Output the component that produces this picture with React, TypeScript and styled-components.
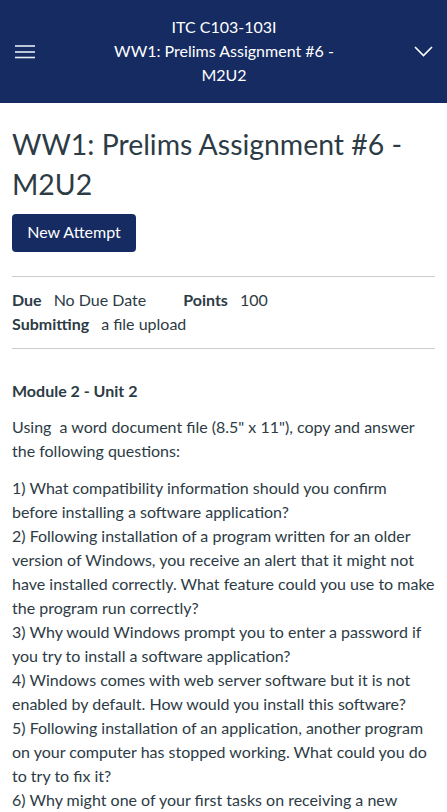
import React from "react";
import styled, { createGlobalStyle } from "styled-components";

const Global = createGlobalStyle`
  html, body { margin: 0; padding: 0; background: #ffffff; }
  body { font-family: Lato, "Open Sans", "Liberation Sans", sans-serif; color: #2d3b45; }
`;

const Header = styled.header`
  height: 103px;
  background: #152b62;
  display: flex;
  align-items: center;
  justify-content: space-between;
  padding: 0 14px 0 15px;
  box-sizing: border-box;
  color: #ffffff;
`;

const IconButton = styled.div`
  width: 20px;
  height: 20px;
  display: flex;
  align-items: center;
  justify-content: center;
`;

const HeaderTitle = styled.div`
  width: 250px;
  margin-top: -1px;
  text-align: center;
  font-size: 16px;
  line-height: 24px;
  color: #ffffff;
`;

const Main = styled.main`
  padding: 21px 12px 0 12px;
`;

const Title = styled.h1`
  margin: 0;
  font-size: 28.4px;
  line-height: 40px;
  font-weight: 400;
  color: #2d3b45;
`;

const PrimaryButton = styled.button`
  margin-top: 10px;
  width: 124px;
  height: 38px;
  background: #152b62;
  color: #ffffff;
  border: none;
  border-radius: 4px;
  font-family: inherit;
  font-size: 16px;
  line-height: 20px;
  padding: 0 0 3px 0;
`;

const Divider = styled.hr<{ $top: number }>`
  margin: ${(p) => p.$top}px 0 0 0;
  border: none;
  border-top: 1px solid #c7cdd1;
  height: 0;
`;

const Details = styled.div`
  padding: 11px 0 12px 0;
  font-size: 16px;
  line-height: 24px;
`;

const DetailRow = styled.div`
  display: flex;
  gap: 37px;
`;

const Detail = styled.span`
  display: inline-flex;
  gap: 12px;
`;

const Label = styled.span`
  font-weight: 700;
`;

const Body = styled.div`
  padding-top: 30px;
  font-size: 16px;
  line-height: 24px;
`;

const Heading = styled.p`
  margin: 0 0 12px 0;
  font-weight: 700;
`;

const Para = styled.p`
  margin: 0 0 13px 0;
`;

export default function App() {
  return (
    <>
      <Global />
      <Header>
        <IconButton>
          <svg width="20" height="14" viewBox="0 0 20 14">
            <g stroke="#e8ecf5" strokeWidth="1.6">
              <line x1="0" y1="1" x2="20" y2="1" />
              <line x1="0" y1="7" x2="20" y2="7" />
              <line x1="0" y1="12.5" x2="20" y2="12.5" />
            </g>
          </svg>
        </IconButton>
        <HeaderTitle>
          ITC C103-103I
          <br />
          WW1: Prelims Assignment #6 - M2U2
        </HeaderTitle>
        <IconButton>
          <svg width="19" height="11" viewBox="0 0 19 11">
            <polyline points="1,1 9.5,9.5 18,1" fill="none" stroke="#ffffff" strokeWidth="1.6" />
          </svg>
        </IconButton>
      </Header>
      <Main>
        <Title>WW1: Prelims Assignment #6 - M2U2</Title>
        <PrimaryButton>New Attempt</PrimaryButton>
        <Divider $top={24} />
        <Details>
          <DetailRow>
            <Detail>
              <Label>Due</Label>
              <span>No Due Date</span>
            </Detail>
            <Detail>
              <Label>Points</Label>
              <span>100</span>
            </Detail>
          </DetailRow>
          <DetailRow>
            <Detail>
              <Label>Submitting</Label>
              <span>a file upload</span>
            </Detail>
          </DetailRow>
        </Details>
        <Divider $top={0} />
        <Body>
          <Heading>Module 2 - Unit 2</Heading>
          <Para>Using&nbsp; a word document file (8.5" x 11"), copy and answer the following questions:</Para>
          <Para>
            1) What compatibility information should you confirm before installing a software application?
            <br />
            2) Following installation of a program written for an older version of Windows, you receive an alert that it might not have installed correctly. What feature could you use to make the program run correctly?
            <br />
            3) Why would Windows prompt you to enter a password if you try to install a software application?
            <br />
            4) Windows comes with web server software but it is not enabled by default. How would you install this software?
            <br />
            5) Following installation of an application, another program on your computer has stopped working. What could you do to try to fix it?
            <br />
            6) Why might one of your first tasks on receiving a new computer be to remove software applications?
          </Para>
        </Body>
      </Main>
    </>
  );
}
